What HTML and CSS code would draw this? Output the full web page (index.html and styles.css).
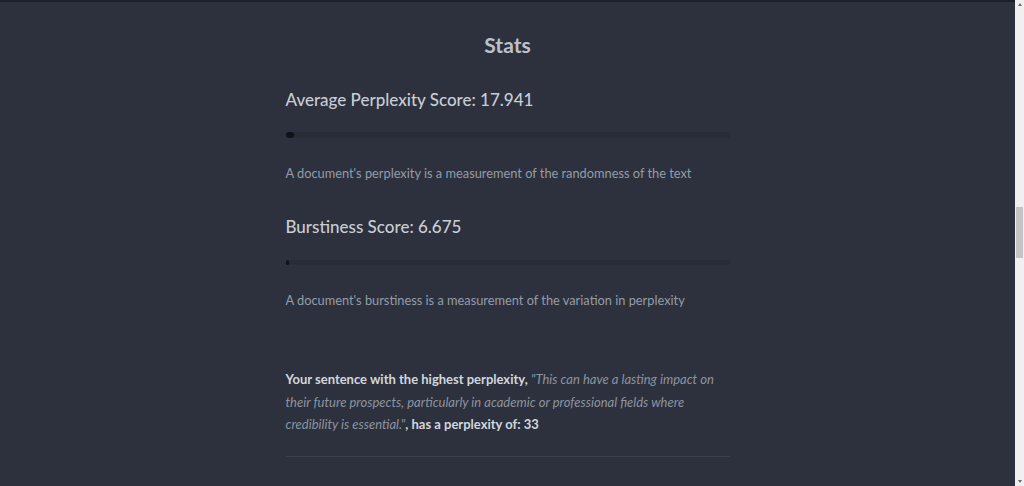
FILE: index.html
```html
<!DOCTYPE html>
<html>
<head>
<meta charset="utf-8">
<link rel="stylesheet" href="styles.css">
</head>
<body>
<div class="frame">
  <main class="main">
    <div class="column">
      <h1 class="title">Stats</h1>
      <h2 class="score first">Average Perplexity Score: 17.941</h2>
      <div class="track"><div class="fill" style="width:8px"></div></div>
      <p class="desc">A document's perplexity is a measurement of the randomness of the text</p>
      <h2 class="score second">Burstiness Score: 6.675</h2>
      <div class="track thin"><div class="fill" style="width:3px"></div></div>
      <p class="desc">A document's burstiness is a measurement of the variation in perplexity</p>
      <p class="highest"><strong>Your sentence with the highest perplexity, </strong><em>"This can have a lasting impact on their future prospects, particularly in academic or professional fields where credibility is essential."</em><strong>, has a perplexity of: 33</strong></p>
      <hr class="divider">
    </div>
  </main>
  <div class="scrollbar">
    <div class="arrow up"></div>
    <div class="sb-track"><div class="thumb"></div></div>
    <div class="arrow down"></div>
  </div>
</div>
</body>
</html>
```

FILE: styles.css
```css
html, body {
  margin: 0;
  padding: 0;
  height: 486px;
  overflow: hidden;
  background: #2c313d;
}
.frame {
  display: flex;
  height: 486px;
}
.main {
  flex: 1;
  border-top: 2px solid #1c2028;
  font-family: Lato, "Noto Sans", sans-serif;
  overflow: hidden;
}
.column {
  width: 444px;
  margin: 0 auto;
  padding-top: 31px;
}
.title {
  margin: 0;
  text-align: center;
  font-size: 21px;
  line-height: 24px;
  font-weight: 700;
  color: #bcc2cc;
}
.score {
  margin: 0;
  font-size: 17px;
  line-height: 24px;
  font-weight: 500;
  color: #c9cdd5;
}
.score.first { margin-top: 31px; }
.score.second { margin-top: 32px; }
.track {
  margin-top: 20px;
  height: 6px;
  border-radius: 3px;
  background: #282c36;
}
.track.thin {
  margin-top: 21px;
  height: 5px;
}
.fill {
  height: 100%;
  border-radius: 3px;
  background: #0f121a;
}
.desc {
  margin: 25px 0 0;
  font-size: 12.8px;
  line-height: 20px;
  color: #969ca8;
}
.highest {
  margin: 58px 0 0;
  font-size: 13px;
  line-height: 22.5px;
  color: #d3d6dc;
}
.highest strong { font-weight: 700; }
.highest em {
  font-style: italic;
  color: #8d94a0;
}
.divider {
  margin: 20px 0 0;
  border: 0;
  height: 1px;
  background: #3b414d;
}
.scrollbar {
  width: 9px;
  background: #f0f0f0;
  display: flex;
  flex-direction: column;
}
.arrow {
  height: 9px;
  display: flex;
  align-items: center;
  justify-content: center;
}
.arrow::before {
  content: "";
  border-left: 2.5px solid transparent;
  border-right: 2.5px solid transparent;
}
.arrow.up::before { border-bottom: 3px solid #6d6d6d; }
.arrow.down::before { border-top: 3px solid #6d6d6d; }
.sb-track {
  flex: 1;
  padding-top: 198px;
}
.thumb {
  height: 51px;
  margin: 0 1px;
  background: #c4c4c4;
}
```
